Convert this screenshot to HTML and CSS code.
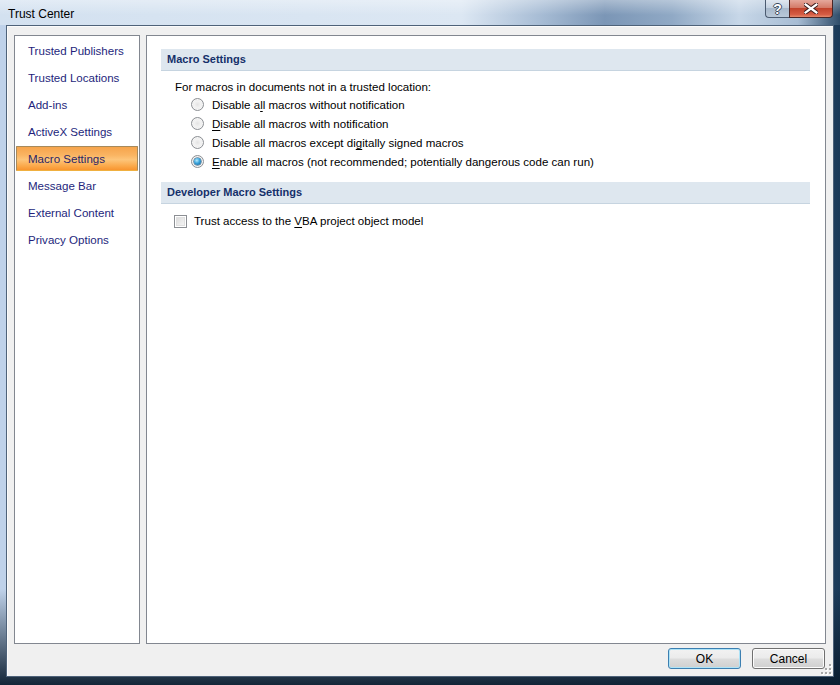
FILE: index.html
```html
<!DOCTYPE html>
<html lang="en">
<head>
    <meta charset="UTF-8">
    <title>Trust Center</title>
    <link rel="stylesheet" href="styles.css">
</head>
<body>
<div class="window">
    <div class="titlebar">
        <span class="title">Trust Center</span>
        <div class="caption-buttons">
            <span class="cap help">?</span>
            <span class="cap close">
                <svg width="14" height="11" viewBox="0 0 14 11">
                    <path d="M1.5 1.5 L12.5 9.5 M12.5 1.5 L1.5 9.5" stroke="#3a1c1c" stroke-width="4.2" stroke-linecap="square"/>
                    <path d="M1.5 1.5 L12.5 9.5 M12.5 1.5 L1.5 9.5" stroke="#fff" stroke-width="2.2" stroke-linecap="square"/>
                </svg>
            </span>
        </div>
    </div>
    <div class="client">
        <div class="panes">
            <ul class="nav">
                <li>Trusted Publishers</li>
                <li>Trusted Locations</li>
                <li>Add-ins</li>
                <li>ActiveX Settings</li>
                <li class="active">Macro Settings</li>
                <li>Message Bar</li>
                <li>External Content</li>
                <li>Privacy Options</li>
            </ul>
            <div class="content">
                <div class="section-head">Macro Settings</div>
                <div class="intro">For macros in documents not in a trusted location:</div>
                <div class="options">
                    <label class="option"><span class="radio"></span><span>Disable a<u>l</u>l macros without notification</span></label>
                    <label class="option"><span class="radio"></span><span><u>D</u>isable all macros with notification</span></label>
                    <label class="option"><span class="radio"></span><span>Disable all macros except di<u>g</u>itally signed macros</span></label>
                    <label class="option"><span class="radio checked"></span><span><u>E</u>nable all macros (not recommended; potentially dangerous code can run)</span></label>
                </div>
                <div class="section-head dev">Developer Macro Settings</div>
                <label class="check-row"><span class="checkbox"></span><span>Trust access to the <u>V</u>BA project object model</span></label>
            </div>
        </div>
        <div class="buttons">
            <button class="btn default">OK</button>
            <button class="btn">Cancel</button>
        </div>
        <svg class="grip" width="11" height="11" viewBox="0 0 11 11">
            <g fill="#fff">
                <rect x="9" y="1" width="2" height="2"/>
                <rect x="9" y="5" width="2" height="2"/>
                <rect x="5" y="5" width="2" height="2"/>
                <rect x="9" y="9" width="2" height="2"/>
                <rect x="5" y="9" width="2" height="2"/>
                <rect x="1" y="9" width="2" height="2"/>
            </g>
            <g fill="#a8a8a8">
                <rect x="8" y="0" width="2" height="2"/>
                <rect x="8" y="4" width="2" height="2"/>
                <rect x="4" y="4" width="2" height="2"/>
                <rect x="8" y="8" width="2" height="2"/>
                <rect x="4" y="8" width="2" height="2"/>
                <rect x="0" y="8" width="2" height="2"/>
            </g>
        </svg>
    </div>
</div>
</body>
</html>
```

FILE: styles.css
```css
* {
    box-sizing: border-box;
}

body {
    margin: 0;
    font-family: "Liberation Sans", Arial, sans-serif;
    font-size: 11.55px;
    background-color: #1c3550;
}

.window {
    width: 840px;
    height: 685px;
    display: flex;
    flex-direction: column;
    background:
        linear-gradient(to bottom, rgba(10, 28, 46, 0) 86%, rgba(10, 28, 46, 0.95) 100%),
        linear-gradient(to right, #bfd2ea 0%, #c6d7ec 40%, #8ea9c7 70%, #3e6283 92%, #1b3a58 100%);
}

.titlebar {
    height: 25px;
    display: flex;
    align-items: flex-start;
    padding-left: 8px;
    background:
        linear-gradient(to bottom, rgba(255, 255, 255, 0.35), rgba(255, 255, 255, 0) 60%),
        linear-gradient(to right, #d3e1f0 0%, #dce7f3 55%, #a9bed6 64%, #7b96b6 72%, #90a9c5 80%, #c7d7e8 88%, #a7bcd3 95%, #2f4d6a 100%);
}

.title {
    margin-top: 6px;
    line-height: 16px;
    font-size: 12px;
    color: #000;
}

.caption-buttons {
    margin-left: auto;
    margin-right: 7px;
    display: flex;
}

.cap {
    height: 18px;
    display: flex;
    align-items: center;
    justify-content: center;
    border: 1px solid #4b5b70;
    border-top: none;
}

.help {
    width: 24px;
    border-right: none;
    border-bottom-left-radius: 4px;
    background: linear-gradient(to bottom, #dfe7f0 0%, #c4d1e0 45%, #a8b9cc 50%, #b9c8d8 100%);
    font-size: 14px;
    font-weight: bold;
    color: #fff;
    text-shadow: 1px 0 0 #3b4a5c, -1px 0 0 #3b4a5c, 0 1px 0 #3b4a5c, 0 -1px 0 #3b4a5c;
}

.close {
    width: 44px;
    border-color: #4a2626;
    border-bottom-right-radius: 4px;
    background: linear-gradient(to bottom, #e5a89c 0%, #d47a68 45%, #c2432c 50%, #d55c44 85%, #e68a6c 100%);
}

.client {
    flex: 1;
    margin: 0 6px 8px 6px;
    padding: 9px 7px 7px 7px;
    display: flex;
    flex-direction: column;
    position: relative;
    background-color: #f0f0f0;
    border: 1px solid #4e6279;
    box-shadow: inset 1px 1px 0 #fbfbfb;
}

.panes {
    flex: 1;
    display: flex;
    gap: 6px;
}

.nav {
    width: 126px;
    margin: 0;
    padding: 2px 1px;
    list-style: none;
    background-color: #fff;
    border: 1px solid #828790;
}

.nav li {
    height: 25px;
    margin-bottom: 2px;
    padding-left: 11px;
    line-height: 24px;
    color: #241f7c;
    border: 1px solid transparent;
}

.nav li.active {
    color: #2a2466;
    border-color: #a68a5c;
    border-bottom-color: #f0b040;
    border-radius: 1px;
    background: linear-gradient(to bottom, #f6a44c 0%, #fab462 35%, #fdc57a 55%, #fba646 85%, #f89530 100%);
}

.content {
    flex: 1;
    padding: 13px 15px 0 14px;
    background-color: #fff;
    border: 1px solid #828790;
}

.section-head {
    height: 22px;
    padding-left: 6px;
    line-height: 21px;
    font-size: 11px;
    font-weight: bold;
    color: #15306a;
    background-color: #dee7ef;
    border-bottom: 1px solid #c6d4e0;
}

.section-head.dev {
    margin-top: 11px;
}

.intro {
    margin: 8px 0 0 14px;
    height: 16px;
    line-height: 16px;
    color: #000;
}

.options {
    margin-left: 30px;
}

.option {
    height: 19px;
    display: flex;
    align-items: center;
    gap: 8px;
    color: #000;
}

.radio {
    width: 13px;
    height: 13px;
    flex-shrink: 0;
    position: relative;
    border-radius: 50%;
    border: 1px solid #8c8f94;
    background: radial-gradient(circle at 50% 50%, #e4e4e4 0%, #f3f3f3 45%, #d4d4d4 100%);
    box-shadow: inset 0 0 0 1px #f6f6f6;
}

.radio.checked::after {
    content: "";
    position: absolute;
    left: 2px;
    top: 2px;
    width: 7px;
    height: 7px;
    border-radius: 50%;
    background: radial-gradient(circle at 40% 35%, #b9ecfc 0%, #39a3dc 45%, #0f5a8c 100%);
    box-shadow: 0 0 0 0.5px #1c4f72;
}

.check-row {
    margin: 7px 0 0 13px;
    height: 20px;
    display: flex;
    align-items: center;
    gap: 7px;
    color: #000;
}

.checkbox {
    width: 13px;
    height: 13px;
    flex-shrink: 0;
    border: 1px solid #8c8f94;
    background: linear-gradient(135deg, #d6d6d6 0%, #ececec 60%, #f8f8f8 100%);
    box-shadow: inset 0 0 0 1px #fff, inset 0 0 0 2px #e0e0e0;
}

u {
    text-decoration: underline;
    text-decoration-skip-ink: none;
    text-underline-offset: 2px;
}

.buttons {
    margin-top: 4px;
    padding-right: 1px;
    display: flex;
    justify-content: flex-end;
    gap: 11px;
}

.btn {
    width: 73px;
    height: 21px;
    padding: 0;
    font-family: inherit;
    font-size: 12px;
    color: #000;
    border: 1px solid #707070;
    border-radius: 3px;
    background: linear-gradient(to bottom, #f2f2f2 0%, #ebebeb 48%, #dddddd 52%, #cfcfcf 100%);
    box-shadow: inset 0 0 0 1px #fcfcfc;
}

.btn.default {
    border-color: #3c7fb1;
    box-shadow: inset 0 0 0 1px #aee3f7;
}

.grip {
    position: absolute;
    right: 1px;
    bottom: 1px;
}
```
